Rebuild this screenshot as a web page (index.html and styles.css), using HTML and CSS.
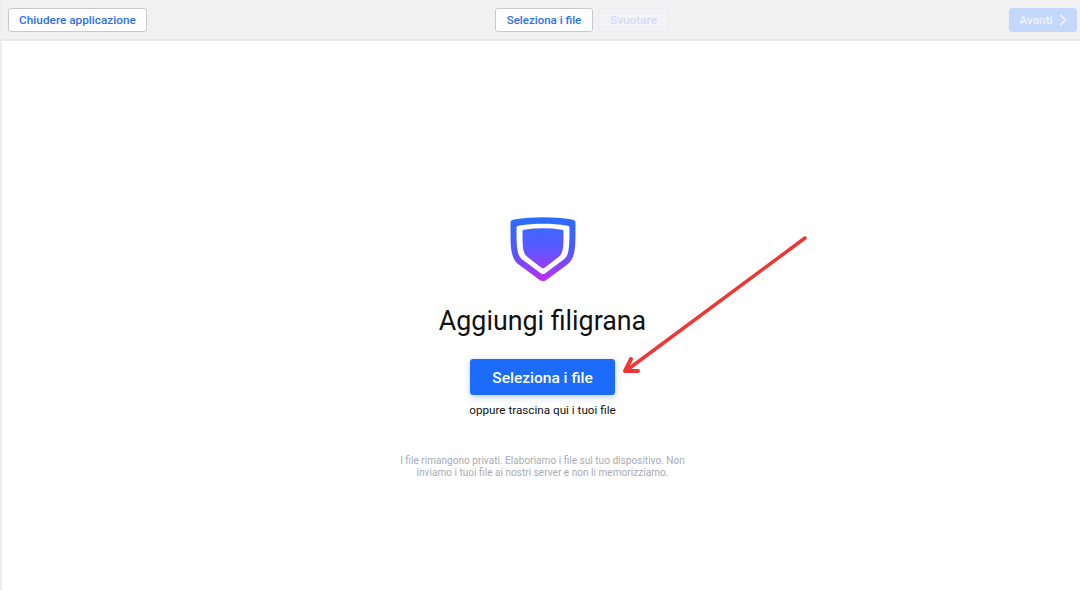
FILE: index.html
```html
<!DOCTYPE html>
<html lang="it">
<head>
  <meta charset="UTF-8" />
  <title>Aggiungi filigrana</title>
  <link rel="stylesheet" href="styles.css">
</head>
<body>
  <header class="toolbar">
    <button class="btn btn-light">Chiudere applicazione</button>
    <div class="toolbar-center">
      <button class="btn btn-light btn-select">Seleziona i file</button>
      <button class="btn btn-clear">Svuotare</button>
    </div>
    <button class="btn btn-next">Avanti
      <svg class="chevron" viewBox="0 0 8 12" width="8" height="12"><path d="M1.5 1 L6.5 6 L1.5 11" fill="none" stroke="currentColor" stroke-width="1.5"/></svg>
    </button>
  </header>

  <main class="content">
    <svg class="logo" viewBox="0 0 66 66" width="66" height="66">
      <defs>
        <linearGradient id="shield-outer" x1="0" y1="0" x2="0" y2="1">
          <stop offset="0" stop-color="#2a6cff"/>
          <stop offset="0.5" stop-color="#4a5cff"/>
          <stop offset="1" stop-color="#c02cf2"/>
        </linearGradient>
        <linearGradient id="shield-inner" x1="0" y1="0" x2="0" y2="1">
          <stop offset="0" stop-color="#3f66ff"/>
          <stop offset="0.5" stop-color="#5a58ff"/>
          <stop offset="1" stop-color="#9a3cfa"/>
        </linearGradient>
      </defs>
      <path d="M0.500 6 C0.500 3.500 1.500 2.800 4 2.400 C23 -0.600 43 -0.600 62 2.400 C64 2.800 65.500 3.500 65.500 6 C65.500 18 65.500 28 64.500 34 C63.500 40 61.500 44 58 47 L37 62.500 C34.500 64.500 31.500 64.500 29 62.500 L8 47 C4.500 44 2.500 40 1.500 34 C0.500 28 0.500 18 0.500 6 Z" fill="url(#shield-outer)"/>
      <path d="M6.500 11 C6.500 9.500 7 9 8.500 8.700 C25 6.200 41 6.200 57.500 8.700 C59 9 59.500 9.500 59.500 11 C59.500 20 59.500 28 58.500 33 C57.700 38 56.500 40.500 53 43 L35 56.500 C33.800 57.400 32.200 57.400 31 56.500 L13 43 C9.500 40.500 8.300 38 7.500 33 C6.500 28 6.500 20 6.500 11 Z" fill="#fff"/>
      <path d="M12.500 14.500 C12.500 13.300 13 12.900 14.100 12.700 C27 10.900 39 10.900 51.900 12.700 C53 12.900 53.500 13.300 53.500 14.500 C53.500 22 53.500 28 52.800 32 C52 36 51 38 48.500 40 L35 50.500 C33.800 51.400 32.200 51.400 31 50.500 L17.500 40 C15 38 14 36 13.200 32 C12.500 28 12.500 22 12.500 14.500 Z" fill="url(#shield-inner)"/>
    </svg>
    <h1 class="title">Aggiungi filigrana</h1>
    <button class="btn-primary">Seleziona i file</button>
    <p class="hint">oppure trascina qui i tuoi file</p>
    <p class="privacy">I file rimangono privati. Elaboriamo i file sul tuo dispositivo. Non inviamo i tuoi file ai nostri server e non li memorizziamo.</p>
  </main>

  <!-- annotation drawn over the screenshot -->
  <svg class="arrow" viewBox="0 0 1080 590" width="1080" height="590">
    <path d="M805 238 L627 370" fill="none" stroke="#f03535" stroke-width="3.500" stroke-linecap="round"/>
    <path d="M631 359 L625 371 L638 371" fill="none" stroke="#f03535" stroke-width="4" stroke-linecap="round" stroke-linejoin="round"/>
  </svg>
</body>
</html>
```

FILE: styles.css
```css
* {
  box-sizing: border-box;
}

body {
  margin: 0;
  height: 590px;
  background: #fff;
  font-family: Roboto, "Noto Sans", sans-serif;
  color: #111;
  border-left: 2px solid #eee;
  position: relative;
  overflow: hidden;
}

.toolbar {
  height: 41px;
  margin-left: -2px;
  padding: 1px 3px 0 8px;
  background: #f1f1f1;
  border-bottom: 2px solid #e8e8e8;
  display: flex;
  justify-content: space-between;
  align-items: center;
}

.toolbar-center {
  display: flex;
  gap: 6px;
  margin-left: 7px;
}

.btn {
  height: 24px;
  padding: 0;
  border-radius: 3px;
  font-family: inherit;
  font-size: 11.800px;
  font-weight: 500;
  display: flex;
  align-items: center;
  justify-content: center;
}

.btn-light {
  width: 139px;
  background: #fff;
  color: #2f6fe6;
  border: 1px solid #c9c9c9;
}

.btn-select {
  width: 98px;
  font-size: 11.500px;
}

.btn-clear {
  width: 69px;
  background: #f3f3f6;
  color: #d3dcf3;
  border: 1px solid #eeeef0;
}

.btn-next {
  width: 68px;
  gap: 6px;
  background: #c3d8fb;
  color: #eef4fe;
  border: 1px solid #c3d8fb;
}

.content {
  display: flex;
  flex-direction: column;
  align-items: center;
  padding: 176px 0 0 3px;
}

.logo {
  display: block;
}

.title {
  margin: 18px 0 0;
  font-size: 26.800px;
  font-weight: 400;
  line-height: 40px;
}

.btn-primary {
  width: 145px;
  height: 36px;
  margin-top: 18px;
  padding-top: 3px;
  background: #1c6bfb;
  color: #fff;
  border: 0;
  border-radius: 3px;
  font-family: inherit;
  font-size: 15.500px;
  font-weight: 500;
  box-shadow: 0 2px 6px rgba(30, 80, 180, 0.3);
}

.hint {
  margin: 6px 0 0;
  font-size: 11.700px;
  line-height: 18px;
}

.privacy {
  width: 292px;
  margin: 36px 0 0;
  color: #a9abb3;
  font-size: 10.100px;
  line-height: 12px;
  text-align: center;
}

.arrow {
  position: absolute;
  top: 0;
  left: -2px;
  pointer-events: none;
}
```
